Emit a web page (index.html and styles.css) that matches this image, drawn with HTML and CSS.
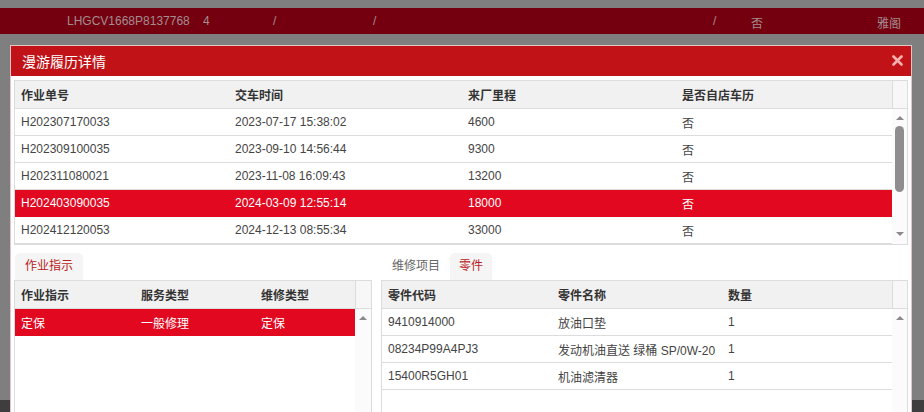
FILE: index.html
```html
<!DOCTYPE html>
<html lang="zh-CN">
  <head>
    <meta charset="UTF-8" />
    <meta name="viewport" content="width=device-width, initial-scale=1.0" />
    <title>漫游履历详情</title>
    <link rel="stylesheet" href="styles.css">
  </head>
  <body>
    <div class="page">
      <div class="vehicle-bar">
        <span class="vb-vin">LHGCV1668P8137768</span>
        <span class="vb-cell vb-4">4</span>
        <span class="vb-cell vb-slash1">/</span>
        <span class="vb-cell vb-slash2">/</span>
        <span class="vb-cell vb-slash3">/</span>
        <span class="vb-cell vb-no">否</span>
        <span class="vb-cell vb-model">雅阁</span>
      </div>
      <div class="page-footer"></div>
    </div>

    <div class="dialog">
      <div class="dialog-header">
        <span class="dialog-title">漫游履历详情</span>
        <svg class="dialog-close" width="11" height="11" viewBox="0 0 11 11">
          <path d="M1.5 1.5 L9.5 9.5 M9.5 1.5 L1.5 9.5" stroke="#f7b0b0" stroke-width="2.6" stroke-linecap="round" />
        </svg>
      </div>
      <div class="dialog-body">
        <!-- 履历列表 -->
        <div class="grid grid-history">
          <div class="grid-head">
            <table>
              <colgroup><col style="width:214px"><col style="width:233px"><col style="width:214px"><col></colgroup>
              <tr><th>作业单号</th><th>交车时间</th><th>来厂里程</th><th>是否自店车历</th></tr>
            </table>
            <div class="head-corner"></div>
          </div>
          <div class="grid-body">
            <table>
              <colgroup><col style="width:214px"><col style="width:233px"><col style="width:214px"><col></colgroup>
              <tr><td>H202307170033</td><td>2023-07-17 15:38:02</td><td>4600</td><td>否</td></tr>
              <tr><td>H202309100035</td><td>2023-09-10 14:56:44</td><td>9300</td><td>否</td></tr>
              <tr><td>H202311080021</td><td>2023-11-08 16:09:43</td><td>13200</td><td>否</td></tr>
              <tr class="selected"><td>H202403090035</td><td>2024-03-09 12:55:14</td><td>18000</td><td>否</td></tr>
              <tr><td>H202412120053</td><td>2024-12-13 08:55:34</td><td>33000</td><td>否</td></tr>
            </table>
            <div class="scrollbar">
              <span class="arrow-up"></span>
              <span class="thumb"></span>
              <span class="arrow-down"></span>
            </div>
          </div>
        </div>

        <div class="detail-row">
          <!-- 作业指示 -->
          <div class="panel panel-left">
            <div class="tabs">
              <span class="tab active">作业指示</span>
            </div>
            <div class="grid grid-tall">
              <div class="grid-head">
                <table>
                  <colgroup><col style="width:120px"><col style="width:120px"><col></colgroup>
                  <tr><th>作业指示</th><th>服务类型</th><th>维修类型</th></tr>
                </table>
                <div class="head-corner corner-wide"></div>
              </div>
              <div class="grid-body">
                <table>
                  <colgroup><col style="width:120px"><col style="width:120px"><col></colgroup>
                  <tr class="selected"><td>定保</td><td>一般修理</td><td>定保</td></tr>
                </table>
                <div class="scrollbar scrollbar-wide">
                  <span class="arrow-up"></span>
                </div>
              </div>
            </div>
          </div>

          <!-- 维修项目 / 零件 -->
          <div class="panel panel-right">
            <div class="tabs">
              <span class="tab">维修项目</span>
              <span class="tab active">零件</span>
            </div>
            <div class="grid grid-tall">
              <div class="grid-head">
                <table>
                  <colgroup><col style="width:170px"><col style="width:170px"><col></colgroup>
                  <tr><th>零件代码</th><th>零件名称</th><th>数量</th></tr>
                </table>
                <div class="head-corner"></div>
              </div>
              <div class="grid-body">
                <table>
                  <colgroup><col style="width:170px"><col style="width:170px"><col></colgroup>
                  <tr><td>9410914000</td><td>放油口垫</td><td>1</td></tr>
                  <tr><td>08234P99A4PJ3</td><td>发动机油直送 绿桶 SP/0W-20</td><td>1</td></tr>
                  <tr><td>15400R5GH01</td><td>机油滤清器</td><td>1</td></tr>
                </table>
                <div class="scrollbar">
                  <span class="arrow-up"></span>
                </div>
              </div>
            </div>
          </div>
        </div>
      </div>
    </div>
  </body>
</html>
```

FILE: styles.css
```css
body {
  margin: 0;
  padding: 0;
  background-color: #7f7f7f;
  font-family: "Liberation Sans", "Noto Sans CJK SC", sans-serif;
  font-size: 12px;
  color: #444;
  overflow: hidden;
}
.page {
  height: 412px;
  display: flex;
  flex-direction: column;
  justify-content: space-between;
  padding-top: 8px;
  box-sizing: border-box;
}
.vehicle-bar {
  height: 26px;
  background-color: #74000f;
  color: #a58d90;
  display: flex;
  align-items: center;
  position: relative;
}
.vb-vin {
  margin-left: 67px;
}
.vb-cell {
  position: absolute;
  top: 6px;
}
.vb-4 { left: 203px; }
.vb-slash1 { left: 273px; }
.vb-slash2 { left: 373px; }
.vb-slash3 { left: 713px; }
.vb-no { left: 751px; }
.vb-model { left: 877px; }
.page-footer {
  height: 12px;
  background-color: #3e3e3e;
}

/* dialog */
.dialog {
  position: absolute;
  left: 10px;
  top: 45px;
  width: 900px;
  height: 380px;
  background-color: #fff;
  border: 1px solid #e4c4c4;
}
.dialog-header {
  height: 30px;
  background-color: #c11317;
  display: flex;
  align-items: center;
  justify-content: space-between;
  padding: 0 8px 0 11px;
}
.dialog-title {
  color: #fff;
  font-size: 14px;
}
.dialog-close {
  display: block;
  margin-top: -1px;
}
.dialog-body {
  padding: 4px 3px 0 3px;
}

/* grids */
.grid {
  border: 1px solid #dcdcdc;
}
.grid table {
  border-collapse: collapse;
  table-layout: fixed;
  flex-grow: 1;
}
.grid-head {
  display: flex;
  background-color: #f1f1f1;
  border-bottom: 1px solid #dcdcdc;
}
.grid-head th {
  height: 27px;
  padding: 0 6px;
  text-align: left;
  font-weight: bold;
  color: #333;
}
.head-corner {
  width: 14px;
  border-left: 1px solid #dcdcdc;
  background-color: #f7f7f7;
}
.corner-wide {
  width: 15px;
}
.grid-body {
  display: flex;
  align-items: flex-start;
}
.grid-body td {
  height: 26px;
  padding: 0 6px;
  border-bottom: 1px solid #dcdcdc;
  white-space: nowrap;
  overflow: hidden;
}
.grid-body tr.selected td {
  background-color: #e1081f;
  color: #fff;
  border-bottom-color: #e1081f;
}
.scrollbar {
  width: 15px;
  align-self: stretch;
  background-color: #fbfbfb;
  display: flex;
  flex-direction: column;
  align-items: center;
  padding-top: 7px;
  box-sizing: border-box;
}
.scrollbar-wide {
  width: 16px;
}
.arrow-up,
.arrow-down {
  width: 0;
  height: 0;
  border-left: 4px solid transparent;
  border-right: 4px solid transparent;
}
.arrow-up {
  border-bottom: 4px solid #8a8a8a;
}
.arrow-down {
  border-top: 4px solid #8a8a8a;
  margin-top: auto;
  margin-bottom: 8px;
}
.thumb {
  width: 9px;
  height: 66px;
  margin-top: 6px;
  border-radius: 5px;
  background-color: #8e8e8e;
}

/* lower panels */
.detail-row {
  display: flex;
  gap: 9px;
  margin-top: 8px;
}
.panel-left {
  width: 358px;
}
.panel-right {
  flex-grow: 1;
}
.tabs {
  display: flex;
  height: 27px;
  align-items: flex-end;
  padding-left: 1px;
}
.tab {
  height: 27px;
  line-height: 27px;
  padding: 0 10px;
  color: #666;
  border-radius: 5px 5px 0 0;
}
.tab.active {
  background-color: #f5f5f5;
  color: #b81c22;
}
.panel-right .tab.active {
  padding: 0 9px;
}
.grid-tall {
  height: 140px;
  display: flex;
  flex-direction: column;
}
.grid-tall .grid-body {
  flex-grow: 1;
}
```
